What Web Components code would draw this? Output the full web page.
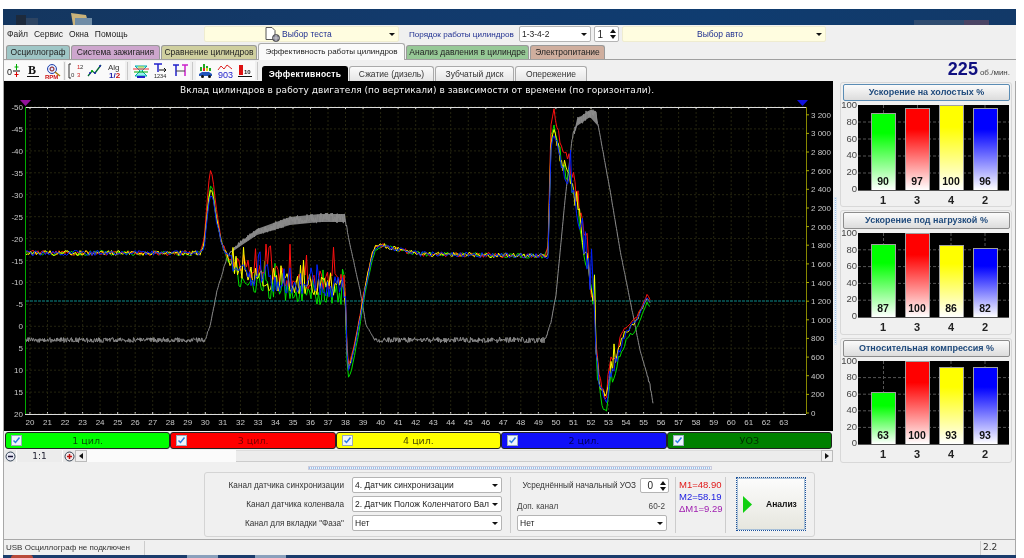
<!DOCTYPE html>
<html lang="ru">
<head>
<meta charset="utf-8">
<title>Осциллограф</title>
<style>
html, body { margin: 0; height: 558px; overflow: hidden; background: #fff; }
body { padding-top: 9px; box-sizing: border-box; font: 8px "Liberation Sans", sans-serif; color: #222; }
#app { display: block; width: 1013px; margin-left: 3px; filter: blur(0.35px); }
</style>
</head>
<body>
<div id="app">
  <x-titlebar></x-titlebar>
  <x-menubar></x-menubar>
  <x-tabs></x-tabs>
  <x-toolbar></x-toolbar>
  <x-workspace>
    <x-scope></x-scope>
    <x-legend></x-legend>
    <x-zoombar></x-zoombar>
    <x-barpanel slot="side" title-text="Ускорение на холостых %" values="90,97,100,96" plot="85" active></x-barpanel>
    <x-barpanel slot="side" title-text="Ускорение под нагрузкой %" values="87,100,86,82" plot="84"></x-barpanel>
    <x-barpanel slot="side" title-text="Относительная компрессия %" values="63,100,93,93" plot="83"></x-barpanel>
  </x-workspace>
  <x-controls></x-controls>
  <x-statusbar></x-statusbar>
  <x-taskbar></x-taskbar>
</div>

<script>
class XTitlebar extends HTMLElement {
    constructor() {
        super();
        this.shadowDOM = this.attachShadow({mode: "open"});
    }
    connectedCallback() {
        this.shadowDOM.innerHTML = `
            <style>
            :host { display: flex; height: 16px; align-items: flex-end; background: linear-gradient(90deg, #14365f, #123a6c 40%, #0f3c70 70%, #123968); overflow: hidden; }
            .ghost { display: flex; align-items: flex-end; gap: 30px; margin-left: 11px; flex: 1; }
            .btns { display: flex; height: 5px; margin-right: 27px; }
            .btns i { display: block; width: 25px; background: #2f4c70; }
            .btns i:last-child { background: #4a4464; }
            </style>
            <div class="ghost">
                <svg width="26" height="11" viewBox="0 0 26 11"><path d="M2 1h10v10H2z" fill="#1d2a3c"/><path d="M12 4h12v7H12z" fill="#2d4462"/></svg>
                <svg width="22" height="12" viewBox="0 0 22 12"><path d="M1 0l15 2 3 10H3z" fill="#c9b27a"/><path d="M5 5h17v7H5z" fill="#6f8ca6"/></svg>
            </div>
            <div class="btns"><i></i><i></i><i></i></div>`;
    }
}
customElements.define("x-titlebar", XTitlebar);

class XCombo extends HTMLElement {
    constructor() {
        super();
        this.shadowDOM = this.attachShadow({mode: "open"});
        this.shadowDOM.innerHTML = `
            <style>
            :host { display: flex; box-sizing: border-box; align-items: center; height: 16px; background: #fff; border: 1px solid #b4b4b4; border-radius: 2px; padding: 0 3px 0 2px; font: 8.500px "Liberation Sans", sans-serif; color: #222; white-space: nowrap; }
            :host([flat]) { background: #fffde0; border: 1px solid #efecd0; color: #1f2f90; }
            .text { flex: 1; min-width: 0; display: flex; align-items: center; }
            :host([centered]) .text { justify-content: center; }
            .arrow { flex: none; width: 0; height: 0; border: 3px solid transparent; border-top: 3px solid #111; border-bottom: 0; margin-left: 1px; }
            </style>
            <span class="text"><slot></slot></span><span class="arrow"></span>`;
    }
}
customElements.define("x-combo", XCombo);

class XSpin extends HTMLElement {
    constructor() {
        super();
        this.shadowDOM = this.attachShadow({mode: "open"});
        this.shadowDOM.innerHTML = `
            <style>
            :host { display: flex; box-sizing: border-box; align-items: center; height: 16px; background: #fff; border: 1px solid #b4b4b4; border-radius: 2px; font: 10px "Liberation Sans", sans-serif; color: #222; }
            .v { flex: 1; text-align: right; padding-right: 4px; }
            .a { display: flex; flex-direction: column; gap: 2px; width: 11px; align-items: center; }
            .a i { width: 0; height: 0; border: 3px solid transparent; }
            .a i:first-child { border-bottom: 4px solid #111; border-top: 0; }
            .a i:last-child { border-top: 4px solid #111; border-bottom: 0; }
            </style>
            <span class="v"><slot></slot></span><span class="a"><i></i><i></i></span>`;
    }
}
customElements.define("x-spin", XSpin);

class XMenubar extends HTMLElement {
    constructor() {
        super();
        this.shadowDOM = this.attachShadow({mode: "open"});
    }
    connectedCallback() {
        this.shadowDOM.innerHTML = `
            <style>
            :host { display: flex; height: 18px; align-items: center; background: #f0f0f0; box-sizing: border-box; border-left: 1px solid #a8a8a8; font-size: 8.500px; }
            .menu { display: flex; gap: 6px; width: 200px; padding-left: 3px; box-sizing: border-box; color: #222; }
            .test { width: 195px; margin-right: 10px; }
            .order { width: 110px; color: #1f2f90; white-space: nowrap; font-size: 8.100px; }
            .sel { width: 72px; margin-right: 3px; }
            .spin { width: 25px; margin-right: 3px; }
            .auto { width: 204px; }
            svg { margin: 0 1px 0 0; }
            .inner { display: flex; align-items: center; padding-left: 58px; }
            </style>
            <div class="menu"><span>Файл</span><span>Сервис</span><span>Окна</span><span>Помощь</span></div>
            <x-combo class="test" flat><span class="inner"><svg width="16" height="15" viewBox="0 0 16 15"><path d="M1 .5h6l3 3v9H1z" fill="#fff" stroke="#555"/><circle cx="11" cy="11" r="3.500" fill="#889" stroke="#444"/><path d="M7.500 11h7M11 7.500v7" stroke="#ddd" stroke-width=".7"/></svg>Выбор теста</span></x-combo>
            <span class="order">Порядок работы цилиндров</span>
            <x-combo class="sel">1-3-4-2</x-combo>
            <x-spin class="spin">1</x-spin>
            <x-combo class="auto" flat centered>Выбор авто</x-combo>`;
    }
}
customElements.define("x-menubar", XMenubar);

class XTabs extends HTMLElement {
    constructor() {
        super();
        this.shadowDOM = this.attachShadow({mode: "open"});
    }
    connectedCallback() {
        const tabs = [
            ["Осциллограф", 64, "#9fc6c6"],
            ["Система зажигания", 89, "#cda6cd"],
            ["Сравнение цилиндров", 96, "#cfcf9f"],
            ["Эффективность работы цилиндров", 147, "#fafafa"],
            ["Анализ давления в цилиндре", 123, "#96c896"],
            ["Электропитание", 75, "#cfae9e"]
        ];
        this.shadowDOM.innerHTML = `
            <style>
            :host { display: flex; height: 17px; box-sizing: border-box; align-items: flex-end; padding-left: 2px; gap: 1px; background: #f0f0f0; border-left: 1px solid #a8a8a8; border-bottom: 1px solid #a0a0a0; }
            .tab { box-sizing: border-box; height: 14px; line-height: 13px; text-align: center; border: 1px solid #999; border-bottom: 0; border-radius: 3px 3px 0 0; color: #222; white-space: nowrap; font-size: 8.500px; }
            .tab.on { height: 17px; line-height: 15px; margin-bottom: -1px; border-color: #aaa; font-size: 8px; }
            </style>
            ${tabs.map((t, i) => `<div class="tab ${i == 3 ? "on" : ""}" style="width:${t[1]}px;background:${t[2]}">${t[0]}</div>`).join("")}`;
    }
}
customElements.define("x-tabs", XTabs);

class XToolbar extends HTMLElement {
    constructor() {
        super();
        this.shadowDOM = this.attachShadow({mode: "open"});
    }
    connectedCallback() {
        const f = `font-family="Liberation Sans"`;
        const icons = [
            `<text x="1" y="12" font-size="9" ${f} fill="#111">0</text><path d="M7 8h7" stroke="#111"/><path d="M10.500 1v6M8.500 4h4" stroke="#0a0"/><path d="M10.500 9v5M8.500 11.500h4" stroke="#d00"/>`,
            `<text x="3" y="11" font-size="12" font-weight="700" font-family="Liberation Serif" fill="#111">B</text><path d="M2 13.500h12" stroke="#111"/>`,
            `<circle cx="7" cy="6" r="4.500" fill="#dfe8ff" stroke="#24a"/><circle cx="7" cy="6" r="2" fill="none" stroke="#811"/><path d="M10 9l5 4" stroke="#a70" stroke-width="1.500"/><text x="0" y="16" font-size="6" font-weight="700" ${f} fill="#c11">RPM</text>`,
            `<path d="M3 1H1v14h2" fill="none" stroke="#333"/><text x="9" y="6" font-size="6" ${f} fill="#c22">1</text><text x="12" y="6" font-size="6" ${f} fill="#333">2</text><text x="9" y="14" font-size="6" ${f} fill="#c22">3</text><text x="3" y="14" font-size="6" ${f} fill="#333">0</text>`,
            `<path d="M1 13l4-5 3 2 6-8" fill="none" stroke="#063" stroke-width="1.300"/><g fill="#22b"><circle cx="3" cy="10" r="1"/><circle cx="8" cy="10" r="1"/><circle cx="13" cy="3" r="1"/></g><circle cx="5" cy="8" r="1" fill="#0a0"/>`,
            `<text x="1" y="7" font-size="8" ${f} fill="#333">Alg</text><text x="2" y="15" font-size="8" font-weight="700" ${f} fill="#22a">1/<tspan fill="#c11">2</tspan></text>`,
            `<path d="M2 3h12L9 8l5 5H2l5-5z" fill="#9ee" stroke="#0aa"/><path d="M0 6h16" stroke="#e33"/><path d="M1 9h14" stroke="#0a0"/><path d="M4 14h8" stroke="#22c" stroke-width="2"/><path d="M5 4h6" stroke="#dd2"/>`,
            `<path d="M2 1h8M6 1v8" stroke="#22c" stroke-width="1.500"/><path d="M7 7h7M12 5l2 2-2 2" fill="none" stroke="#111"/><text x="2" y="15" font-size="5.500" ${f} fill="#222">1234</text>`,
            `<path d="M1 2h6M4 2v11" stroke="#22c" stroke-width="1.500"/><path d="M10 2h6M13 2v11" stroke="#c2c" stroke-width="1.500"/><path d="M4 8h9" stroke="#444"/>`,
            `<path d="M2 8V4h2v4zM5 8V1h2v7zM8 8V3h2v5zM11 8V5h2v3z" fill="#2a2"/><path d="M5 8V5h2v3z" fill="#d22"/><path d="M8 8V5h2v3z" fill="#dd2"/><path d="M1 13v-2l3-2h7l3 2v2z" fill="#25b"/><circle cx="4.500" cy="13.500" r="1.500" fill="#111"/><circle cx="11.500" cy="13.500" r="1.500" fill="#111"/>`,
            `<path d="M1 7l3-4 3 3 3-4 5 4" fill="none" stroke="#d22"/><text x="1" y="15" font-size="9" ${f} fill="#22c">903</text>`,
            `<path d="M2 2h4v10H2z" fill="#d11"/><path d="M1 13.500h14" stroke="#111"/><text x="7" y="11" font-size="6" font-weight="700" ${f} fill="#222">10</text>`
        ];
        const btn = i => `<span class="b"><svg width="16" height="16" viewBox="0 0 16 16">${icons[i]}</svg></span>`;
        const group = (a, b, cls) => icons.slice(a, b).map((_, n) => btn(a + n)).join("") + `<i class="sep ${cls}"></i>`;
        this.shadowDOM.innerHTML = `
            <style>
            :host { display: flex; height: 21px; box-sizing: border-box; align-items: center; background: #f0f0f0; border-left: 1px solid #a8a8a8; }
            .b { display: flex; width: 19.500px; height: 19px; align-items: center; justify-content: center; background: #fafafa; }
            .sep { width: 1px; height: 18px; background: #c8c8c8; margin: 0 3px 0 2.500px; }
            .sep.first { margin: 0 1px 0 1.500px; }
            .tabs { display: flex; align-self: flex-end; margin-left: 1px; gap: 1px; }
            .t { box-sizing: border-box; height: 15px; line-height: 14px; text-align: center; background: linear-gradient(#fbfbfb, #e6e6e6); border: 1px solid #aaa; border-bottom: 0; border-radius: 3px 3px 0 0; color: #333; font-size: 8.500px; }
            .t.on { background: #000; color: #fff; font-weight: 700; border-color: #000; letter-spacing: .3px; }
            .rpm { margin-left: auto; padding-right: 6px; align-self: flex-end; color: #444; font-size: 8px; line-height: 17px; }
            .rpm b { font-size: 18px; color: #101080; margin-right: 2px; line-height: 17px; }
            </style>
            ${group(0, 3, "first")}${group(3, 6)}${group(6, 9)}${group(9, 12)}
            <div class="tabs">
                <div class="t on" style="width:86px">Эффективность</div>
                <div class="t" style="width:85px">Сжатие (дизель)</div>
                <div class="t" style="width:79px">Зубчатый диск</div>
                <div class="t" style="width:72px">Опережение</div>
            </div>
            <div class="rpm"><b>225</b>об./мин.</div>`;
    }
}
customElements.define("x-toolbar", XToolbar);

class XWorkspace extends HTMLElement {
    constructor() {
        super();
        this.shadowDOM = this.attachShadow({mode: "open"});
        this.shadowDOM.innerHTML = `
            <style>
            :host { display: grid; grid-template-columns: 829px 7px 172px; height: 381px; background: #f0f0f0; border-left: 1px solid #a8a8a8; border-right: 1px solid #a8a8a8; box-sizing: border-box; width: 1013px; }
            .left { display: flex; flex-direction: column; gap: 1px; }
            .handle i { display: block; margin: 116px 0 0 1px; width: 3px; height: 148px; background: repeating-linear-gradient(#9cc0e8 0 1px, #eef4fb 1px 2px); border: 1px solid #dce6f0; box-sizing: border-box; }
            .side { display: flex; flex-direction: column; gap: 3px; padding-top: 1px; }
            </style>
            <div class="left"><slot></slot></div>
            <div class="handle"><i></i></div>
            <div class="side"><slot name="side"></slot></div>`;
    }
}
customElements.define("x-workspace", XWorkspace);

class XScope extends HTMLElement {
    constructor() {
        super();
        this.shadowDOM = this.attachShadow({mode: "open"});
    }
    connectedCallback() {
        this.render();
    }
    rng(seed) {
        return () => {
            seed = (seed + 0x6D2B79F5) | 0;
            let t = Math.imul(seed ^ (seed >>> 15), 1 | seed);
            t = (t + Math.imul(t ^ (t >>> 7), 61 | t)) ^ t;
            return ((t ^ (t >>> 14)) >>> 0) / 4294967296;
        };
    }
    lerp(points, x) {
        if (x <= points[0][0]) return points[0][1];
        for (let i = 1; i < points.length; i++) {
            if (x <= points[i][0]) {
                const a = points[i - 1], b = points[i];
                return a[1] + (b[1] - a[1]) * (x - a[0]) / (b[0] - a[0] || 1);
            }
        }
        return points[points.length - 1][1];
    }
    render() {
        const X = t => 30 + (t - 20) * 17.53;
        const Y = v => 107 + (v + 50) * 4.386;
        const base = [[26,253],[200,253],[204,245],[207,212],[210,186],[213,190],[216,215],[222,245],[228,258],[236,270],[260,280],[300,284],[345,288],[346,330],[348,372],[352,360],[358,330],[365,290],[372,257],[376,247],[385,246],[400,250],[420,254],[545,256],[548,250],[551,135],[554,120],[560,150],[566,165],[571,172],[576,195],[581,225],[586,255],[591,285],[594,300],[596,345],[598,375],[602,392],[606,400],[610,378],[616,362],[622,340],[628,330],[636,322],[647,298],[651,304]];
        // per colour: vertical shift around base in the peak/noisy parts
        const shift = {
            "#00e000": [[200,0],[210,0],[222,0],[240,9],[345,9],[372,3],[385,0],[545,0],[551,0],[554,8],[590,6],[610,8],[630,8],[651,4]],
            "#ff1010": [[200,0],[206,-6],[210,-16],[222,0],[240,-7],[345,-6],[372,-3],[385,0],[545,0],[551,-10],[554,-10],[572,-6],[590,-2],[610,-8],[630,-4],[651,-3]],
            "#ffff00": [[200,0],[210,4],[222,0],[345,0],[372,-3],[385,0],[545,0],[551,8],[554,6],[590,4],[610,-8],[630,0],[651,0]],
            "#0020ff": [[200,0],[210,10],[222,0],[345,0],[372,0],[545,0],[551,14],[554,14],[590,0],[610,4],[630,-1],[651,0]]
        };
        const noise = [[26,5],[200,5],[205,2],[222,4],[232,12],[250,20],[345,22],[347,3],[372,3],[385,5],[545,5],[550,3],[560,14],[575,22],[594,30],[598,12],[606,18],[625,6],[640,3],[651,1]];
        let traces = "";
        let seed = 7;
        for (const color of Object.keys(shift)) {
            const r = this.rng(seed += 11);
            let d = "";
            for (let x = 26; x <= 651; x += 1.5) {
                const n = this.lerp(noise, x);
                const spike = r() < 0.1 && n > 10 ? -n * 1.1 : 0;
                const y = this.lerp(base, x) + this.lerp(shift[color], x) + (r() - 0.5) * n + spike;
                d += (d ? "L" : "M") + x + " " + y.toFixed(1);
            }
            traces += `<path d="${d}" fill="none" stroke="${color}" stroke-width="1"/>`;
        }
        const grayPts = [[26,340],[205,340],[210,326],[217,291],[227,257],[240,243],[257,232],[290,221],[320,218],[345,218],[350,245],[360,290],[366,325],[375,340],[545,340],[551,322],[556,295],[565,200],[572,140],[577,122],[590,113],[596,115],[599,130],[610,190],[620,250],[630,300],[640,350],[650,385],[653,403]];
        const grayNoise = [[26,5],[205,5],[210,1],[225,2],[240,5],[290,10],[345,10],[348,1],[372,1],[378,5],[545,6],[550,1],[570,1],[576,10],[595,10],[599,1],[645,1],[650,5],[653,1]];
        const rg = this.rng(99);
        let gd = "";
        for (let x = 26; x <= 653; x += 0.5) {
            const y = this.lerp(grayPts, x) + (rg() - 0.5) * this.lerp(grayNoise, x);
            gd += (gd ? "L" : "M") + x.toFixed(1) + " " + y.toFixed(1);
        }
        let grid = "";
        let labels = "";
        for (let t = 20; t <= 63; t++) {
            grid += `<path d="M${X(t).toFixed(1)} 108V414" stroke="#24240f" stroke-dasharray="2 2"/><path d="M${X(t).toFixed(1)} 107v2M${X(t).toFixed(1)} 412v2" stroke="#ccc"/>`;
            labels += `<text x="${X(t).toFixed(1)}" y="425" text-anchor="middle">${t}</text>`;
        }
        for (let v = -50; v <= 20; v += 5) {
            grid += `<path d="M26 ${Y(v).toFixed(1)}H806" stroke="#24240f" stroke-dasharray="2 2"/>`;
            labels += `<text x="23" y="${(Y(v) + 3).toFixed(1)}" text-anchor="end">${v < 0 ? v : Math.abs(v)}</text>`;
        }
        for (let r = 0; r <= 3200; r += 200) {
            const y = 413 - r * 0.0932;
            const s = r >= 1000 ? String(r).replace(/(\d)(\d{3})$/, "$1 $2") : r;
            labels += `<text x="811" y="${(y + 3).toFixed(1)}">${s}</text><path d="M806 ${y.toFixed(1)}h3" stroke="#aa0"/>`;
        }
        this.shadowDOM.innerHTML = `
            <style>
            :host { display: block; height: 350px; background: #000; }
            svg { display: block; }
            text { font: 8px "Liberation Sans", sans-serif; fill: #c8c8c8; }
            .title { font: 9px "DejaVu Sans", sans-serif; fill: #f4f4f4; }
            </style>
            <svg width="829" height="350" viewBox="4 81 829 350">
                <text class="title" x="417" y="93" text-anchor="middle" textLength="474">Вклад цилиндров в работу двигателя (по вертикали) в зависимости от времени (по горизонтали).</text>
                ${grid}
                <path d="M25 107.500H806M25 414.500H806" stroke="#ddd"/>
                <path d="M25.500 107V414" stroke="#0a0"/>
                <path d="M806.500 107V414" stroke="#880"/>
                <path d="M26 301H806" stroke="#0a8a8a" stroke-dasharray="3 1"/>
                <path d="M232 250L242 241L257 229L290 217L320 214L345 214V222L320 222L290 225L257 235L242 245L232 252Z" fill="#808080"/>
                <path d="M573 137L577 119L590 110L596 111L598 126L590 117L577 126Z" fill="#808080"/>
                <path d="${gd}" fill="none" stroke="#8c8c8c" stroke-width="1"/>
                ${traces}
                <path d="M20 100h11l-5.500 6z" fill="#90109a"/>
                <path d="M797 100h11l-5.500 6z" fill="#1010e0"/>
                ${labels}
            </svg>`;
    }
}
customElements.define("x-scope", XScope);

class XLegend extends HTMLElement {
    constructor() {
        super();
        this.shadowDOM = this.attachShadow({mode: "open"});
    }
    connectedCallback() {
        const items = [
            ["1 цил.", "#00ff00", "#064f06"],
            ["3 цил.", "#ff0000", "#7a0000"],
            ["4 цил.", "#ffff00", "#4f4f00"],
            ["2 цил.", "#1010f8", "#00005a"],
            ["УОЗ", "#008000", "#002a00"]
        ];
        this.shadowDOM.innerHTML = `
            <style>
            :host { display: grid; grid-template-columns: repeat(5, 1fr); height: 17px; margin: 0 1px 0 1px; }
            .i { display: flex; align-items: center; justify-content: center; position: relative; border: 1px solid #222; border-radius: 3px; box-sizing: border-box; font: 9.500px "DejaVu Sans", sans-serif; }
            svg { position: absolute; left: 5px; top: 2px; }
            </style>
            ${items.map(i => `<div class="i" style="background:${i[1]};color:${i[2]}">
                <svg width="11" height="11" viewBox="0 0 11 11"><rect x=".5" y=".5" width="10" height="10" fill="#eef4fb" stroke="#9ab"/><path d="M2.500 5.500l2 2 4-5" fill="none" stroke="#2a7be0" stroke-width="1.500"/></svg>
                ${i[0]}</div>`).join("")}`;
    }
}
customElements.define("x-legend", XLegend);

class XZoombar extends HTMLElement {
    constructor() {
        super();
        this.shadowDOM = this.attachShadow({mode: "open"});
    }
    connectedCallback() {
        this.shadowDOM.innerHTML = `
            <style>
            :host { display: flex; height: 12px; align-items: stretch; background: #fafafa; font: 9px "DejaVu Sans", sans-serif; width: 829px; }
            .r { width: 12px; display: flex; align-items: center; justify-content: center; background: #e8e8e8; }
            .r svg { display: block; }
            .z { width: 45px; text-align: center; background: #ececec; line-height: 13px; margin: 0 1px; color: #223; }
            .btn { width: 12px; background: #f0f0f0; border: 1px solid #bbb; box-sizing: border-box; display: flex; align-items: center; justify-content: center; }
            .btn i { width: 0; height: 0; border: 3px solid transparent; }
            .track { width: 149px; background: #fbfbfb; }
            .thumb { flex: 1; background: #ececec; border-top: 1px solid #ddd; border-bottom: 1px solid #ccc; }
            </style>
            <span class="r"><svg width="11" height="11" viewBox="0 0 11 11"><circle cx="5.500" cy="5.500" r="4.500" fill="#e8e8f4" stroke="#345"/><path d="M3 5.500h5" stroke="#113" stroke-width="1.500"/></svg></span>
            <span class="z">1:1</span>
            <span class="r"><svg width="11" height="11" viewBox="0 0 11 11"><circle cx="5.500" cy="5.500" r="4.500" fill="#f4e8e8" stroke="#345"/><path d="M3 5.500h5M5.500 3v5" stroke="#b11" stroke-width="1.500"/></svg></span>
            <span class="btn"><i style="border-right:4px solid #111;border-left:0"></i></span>
            <span class="track"></span>
            <span class="thumb"></span>
            <span class="btn"><i style="border-left:4px solid #111;border-right:0"></i></span>`;
    }
}
customElements.define("x-zoombar", XZoombar);

class XBarpanel extends HTMLElement {
    constructor() {
        super();
        this.shadowDOM = this.attachShadow({mode: "open"});
    }
    connectedCallback() {
        const h = Number(this.getAttribute("plot"));
        const values = this.getAttribute("values").split(",").map(Number);
        const colors = ["#00ff00", "#ff0000", "#ffff00", "#0000ff"];
        const names = [1, 3, 4, 2];
        const hLines = [1, 2, 3, 4].map(i => `<path d="M0 ${(h * i / 5).toFixed(1)}H151" stroke="#555" stroke-dasharray="3 2"/>`).join("");
        const vLines = [25.5, 59.5, 93, 127].map(x => `<path d="M${x} 0V${h}" stroke="#555" stroke-dasharray="3 2"/>`).join("");
        this.shadowDOM.innerHTML = `
            <style>
            :host { display: block; box-sizing: border-box; height: 125px; border: 1px solid #d8d8d8; border-radius: 3px; padding: 1px 1px 0 2px; font: 9px "Liberation Sans", sans-serif; }
            .head { box-sizing: border-box; height: 17px; line-height: 15px; text-align: center; font-weight: 700; font-size: 9px; color: #1f4a7c; background: linear-gradient(#fbfbfb, #dcdcdc); border: 1px solid #8c8c8c; border-radius: 2px; }
            :host([active]) .head { border: 1px solid #5a8cb4; }
            .chart { display: grid; grid-template-columns: 15px 151px; margin-top: 4px; }
            .y { display: flex; flex-direction: column; justify-content: space-between; align-items: flex-end; padding-right: 1px; color: #444; font-size: 9.500px; line-height: 6px; height: ${h + 5}px; margin: -3px 0 -1px; }
            .plot { position: relative; height: ${h}px; background: #000; border-bottom: 1px solid #555; }
            .plot svg { position: absolute; left: 0; top: 0; }
            .bars { position: relative; display: grid; grid-template-columns: repeat(4, 34px); height: 100%; padding-left: 8px; }
            .col { display: flex; justify-content: center; align-items: flex-end; }
            .bar { box-sizing: border-box; width: 25px; border: 1px solid #a0a0a0; border-bottom: 0; display: flex; align-items: flex-end; justify-content: center; font-weight: 700; font-size: 10.500px; color: #111; padding-bottom: 3px; }
            .names { display: grid; grid-template-columns: repeat(4, 34px); margin-left: 23px; font: 700 11px "Liberation Sans", sans-serif; color: #222; text-align: center; padding-top: 3px; }
            </style>
            <div class="head">${this.getAttribute("title-text")}</div>
            <div class="chart">
                <div class="y">${[100, 80, 60, 40, 20, 0].map(v => `<span>${v}</span>`).join("")}</div>
                <div class="plot">
                    <svg width="151" height="${h}">${hLines}${vLines}</svg>
                    <div class="bars">${values.map((v, i) => `<div class="col"><div class="bar" style="height:${(v * h / 100).toFixed(0)}px;background:linear-gradient(${colors[i]} 25%, #fff)">${v}</div></div>`).join("")}</div>
                </div>
            </div>
            <div class="names">${names.map(n => `<span>${n}</span>`).join("")}</div>`;
    }
}
customElements.define("x-barpanel", XBarpanel);

class XControls extends HTMLElement {
    constructor() {
        super();
        this.shadowDOM = this.attachShadow({mode: "open"});
    }
    connectedCallback() {
        this.shadowDOM.innerHTML = `
            <style>
            :host { display: flex; flex-direction: column; align-items: center; height: 78px; box-sizing: border-box; background: #f0f0f0; border-left: 1px solid #a8a8a8; border-right: 1px solid #a8a8a8; border-bottom: 1px solid #a8a8a8; padding-top: 4px; width: 1013px; font: 8.200px "Liberation Sans", sans-serif; color: #333; }
            .split { width: 404px; height: 4px; box-sizing: border-box; border: 1px solid #ccd; background: repeating-linear-gradient(90deg, #9cc0e8 0 1px, #eef4fb 1px 2px); }
            .panel { display: flex; box-sizing: border-box; width: 611px; height: 65px; margin-top: 2px; border: 1px solid #d4d4d4; border-radius: 3px; padding: 4px 0 0 0; }
            .rows { display: grid; grid-template-columns: 139px 150px; column-gap: 8px; row-gap: 3px; grid-auto-rows: 16px; align-items: center; width: 305px; flex: none; }
            label { text-align: right; white-space: nowrap; }
            .div { width: 1px; background: #ccc; height: 56px; flex: none; }
            .mid { width: 164px; flex: none; box-sizing: border-box; padding: 1px 0 0 6px; }
            .mid .a { display: flex; align-items: center; justify-content: flex-end; gap: 4px; padding-right: 6px; white-space: nowrap; }
            .mid .a x-spin { width: 29px; height: 15px; }
            .mid .c { display: flex; justify-content: space-between; padding: 0 10px 0 0; margin-top: 9px; line-height: 10px; color: #444; }
            .mid x-combo { width: 150px; margin-top: 3px; }
            .m { width: 49px; flex: none; box-sizing: border-box; padding: 2px 0 0 3px; font: 9.500px/12px "Liberation Sans", sans-serif; }
            .run { flex: none; box-sizing: border-box; width: 70px; height: 54px; margin-left: 10px; display: flex; align-items: center; gap: 14px; padding-left: 6px; background: linear-gradient(#fcfcfc, #e6e6de); border: 1px dotted #1a4f9a; box-shadow: inset 0 0 0 1px #a8c0d8; font: 700 8.500px "Liberation Sans", sans-serif; color: #111; }
            </style>
            <div class="split"></div>
            <div class="panel">
                <div class="rows">
                    <label>Канал датчика синхронизации</label><x-combo>4. Датчик синхронизации</x-combo>
                    <label>Канал датчика коленвала</label><x-combo>2. Датчик Полож Коленчатого Вал</x-combo>
                    <label>Канал для вкладки "Фаза"</label><x-combo>Нет</x-combo>
                </div>
                <div class="div"></div>
                <div class="mid">
                    <div class="a"><span>Усреднённый начальный УОЗ</span><x-spin>0</x-spin></div>
                    <div class="c"><span>Доп. канал</span><span>60-2</span></div>
                    <x-combo>Нет</x-combo>
                </div>
                <div class="div"></div>
                <div class="m">
                    <div style="color:#e01818">M1=48.90</div>
                    <div style="color:#2020e0">M2=58.19</div>
                    <div style="color:#a020b0">ΔM1=9.29</div>
                </div>
                <div class="div"></div>
                <div class="run"><svg width="9" height="17" viewBox="0 0 9 17"><path d="M0 0l9 8.500L0 17z" fill="#10d010"/></svg><span>Анализ</span></div>
            </div>`;
    }
}
customElements.define("x-controls", XControls);

class XStatusbar extends HTMLElement {
    constructor() {
        super();
        this.shadowDOM = this.attachShadow({mode: "open"});
    }
    connectedCallback() {
        this.shadowDOM.innerHTML = `
            <style>
            :host { display: flex; height: 15px; width: 1013px; box-sizing: border-box; background: #f0f0f0; border-left: 1px solid #a8a8a8; border-right: 1px solid #a8a8a8; padding-top: 1px; font: 8px "Liberation Sans", sans-serif; color: #333; }
            div { border-right: 1px solid #ccc; padding-left: 2px; line-height: 13px; box-sizing: border-box; white-space: nowrap; }
            .a { width: 141px; }
            .b { flex: 1; }
            .c { width: 34px; border-right: 0; font: 9px/13px "DejaVu Sans", sans-serif; }
            </style>
            <div class="a">USB Осциллограф не подключен</div><div class="b"></div><div class="c">2.2</div>`;
    }
}
customElements.define("x-statusbar", XStatusbar);

class XTaskbar extends HTMLElement {
    constructor() {
        super();
        this.shadowDOM = this.attachShadow({mode: "open"});
    }
    connectedCallback() {
        this.shadowDOM.innerHTML = `
            <style>
            :host { display: flex; height: 3px; background: #1a3c6c; width: 1013px; overflow: hidden; }
            i { display: block; height: 3px; }
            .o { width: 22px; margin-left: 8px; background: #b84a3a; border-radius: 6px 6px 0 0; }
            .p { width: 31px; background: #8aa0bc; }
            </style>
            <i class="o"></i><i class="p" style="margin-left:154px"></i><i class="p" style="margin-left:37px"></i>`;
    }
}
customElements.define("x-taskbar", XTaskbar);
</script>
</body>
</html>
